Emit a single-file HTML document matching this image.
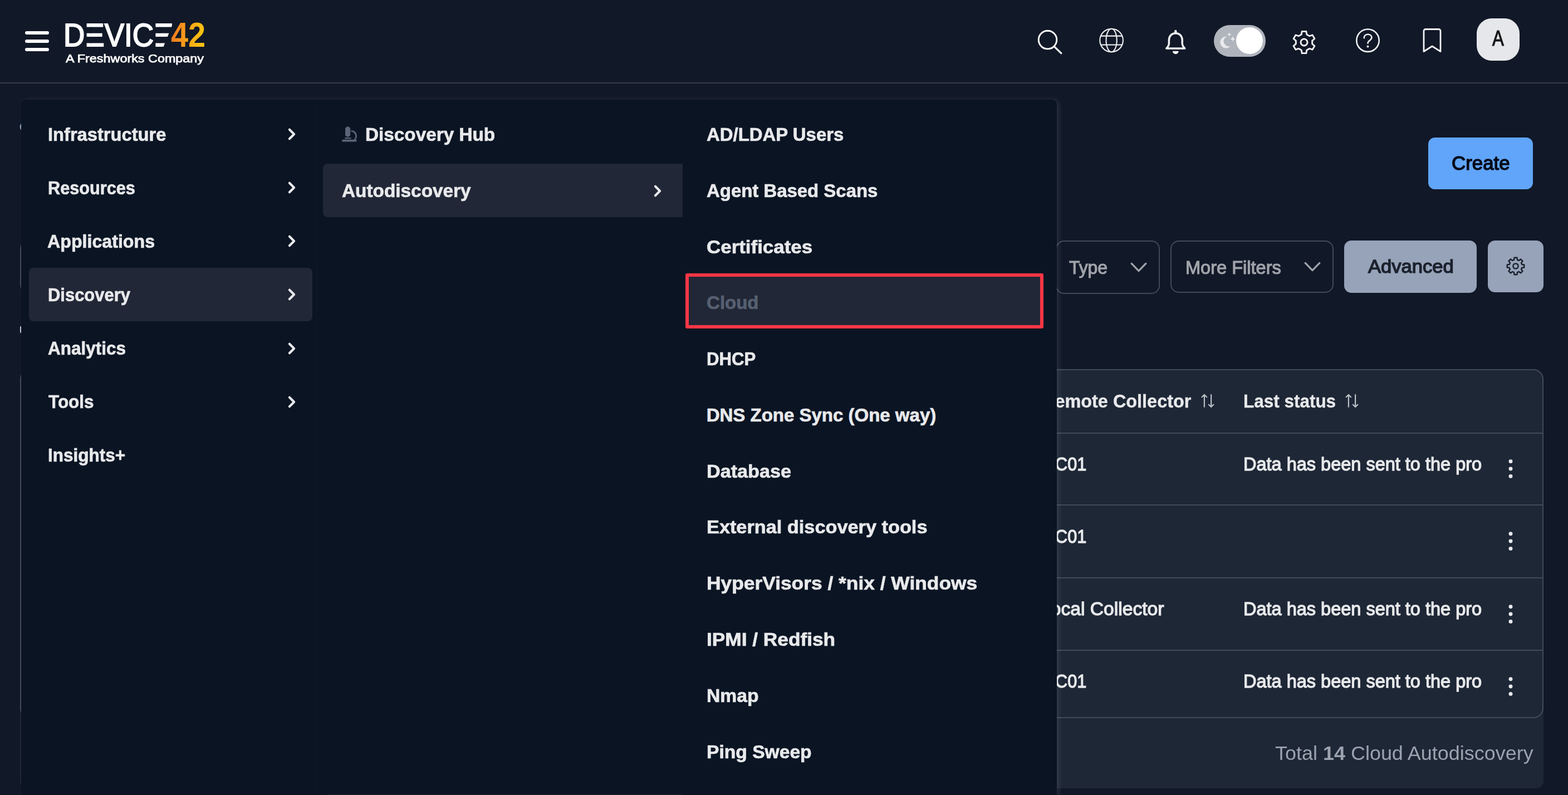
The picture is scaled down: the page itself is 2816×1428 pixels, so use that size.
<!DOCTYPE html>
<html lang="en">
<head>
<meta charset="utf-8">
<title>Device42 - Cloud Autodiscovery</title>
<meta name="viewport" content="width=2816, initial-scale=1">
<style>
html,body{margin:0;padding:0;background:#111827;overflow:hidden;}
html{width:2816px;height:1428px;}
body{width:2816px;height:1428px;overflow:hidden;position:relative;font-family:'Liberation Sans', sans-serif;}
.a{position:absolute;display:block;box-sizing:border-box;}
.t{position:absolute;white-space:nowrap;line-height:1;transform-origin:0 50%;}
.t b{font-weight:700;}
.grad{background:linear-gradient(100deg,#f47c20 10%,#fbb613 70%,#ffcc10 100%);-webkit-background-clip:text;background-clip:text;color:transparent !important;-webkit-text-fill-color:transparent;}
</style>
</head>
<body>
<!-- ===== header ===== -->

<div class="a" style="left:0;top:148px;width:2816px;height:2px;background:#373c49"></div>
<div class="a" style="left:2651.8px;top:32.7px;width:77.2px;height:76.4px;border-radius:27px;background:#e5e7ea"></div>

<div class="t" style="left:114.26px;top:34px;font-size:58.0px;color:#ffffff;transform:scaleX(0.9140);-webkit-text-stroke:2.0px #ffffff;">DEVICE</div>
<svg class="a" style="left:0;top:0" width="400" height="120" viewBox="0 0 400 120" fill="#111827"><rect x="154" y="48.56" width="10" height="11.13"/><rect x="154" y="66.00" width="10" height="11.44"/><rect x="278" y="48.56" width="10" height="11.13"/><rect x="278" y="66.00" width="10" height="11.44"/><path d="M311.8 39.0 L326 39.0 L326 87.0 L292.3 87.0 Z"/></svg>
<div class="t grad" style="left:306.60px;top:31px;font-size:63.0px;font-weight:700;color:#f59e0b;transform:scaleX(0.8863);">42</div>
<div class="t" style="left:118.44px;top:95px;font-size:20.0px;color:#ffffff;transform:scaleX(1.1683);-webkit-text-stroke:0.75px #ffffff;">A Freshworks Company</div>
<div class="a" style="left:45px;top:56px;width:42.5px;height:6.4px;border-radius:4px;background:#fff"></div><div class="a" style="left:45px;top:70.8px;width:42.5px;height:6.4px;border-radius:4px;background:#fff"></div><div class="a" style="left:45px;top:85.8px;width:42.5px;height:6.4px;border-radius:4px;background:#fff"></div>
<svg class="a" style="left:1856px;top:46px" width="60" height="60" viewBox="1856 46 60 60"><circle cx="1881.5" cy="71.6" r="16.3" fill="none" stroke="#fff" stroke-width="2.9"/><path d="M1893.6 83.9 L1905.8 95.6" stroke="#fff" stroke-width="3.2" stroke-linecap="round"/></svg>
<svg class="a" style="left:1966px;top:42px" width="60" height="60" viewBox="1966 42 60 60"><g fill="none" stroke="#f1f2f4" stroke-width="2.05"><circle cx="1996.1" cy="72.5" r="20.8"/><ellipse cx="1996.1" cy="72.5" rx="9.6" ry="20.8"/><path d="M1976.8 64.6 H2015.4 M1976.8 80.5 H2015.4"/></g></svg>
<svg class="a" style="left:2081px;top:44px" width="60" height="64" viewBox="2081 44 60 64"><path d="M2111.3 59.7 c-7.2 0 -11.9 5.4 -11.9 12.2 v6 c0 3.2 -1.7 6 -4.6 9 h33 c-2.9 -3 -4.6 -5.8 -4.6 -9 v-6 c0 -6.8 -4.7 -12.2 -11.9 -12.2 z" fill="none" stroke="#f1f2f4" stroke-width="3.5" stroke-linejoin="round"/><path d="M2111.3 56 v3" stroke="#f1f2f4" stroke-width="4.4" stroke-linecap="round"/><path d="M2105.9 91.8 h10.8 a5.4 5.4 0 0 1 -10.8 0 z" fill="#f1f2f4"/></svg>
<div class="a" style="left:2179.7px;top:44.8px;width:93.5px;height:57.2px;border-radius:29px;background:#b0b4bd"></div><div class="a" style="left:2219.8px;top:48.5px;width:48.4px;height:48.4px;border-radius:50%;background:#fff"></div><svg class="a" style="left:2186px;top:56px" width="36" height="36" viewBox="0 0 36 36"><path d="M17.5 9.5 a10.5 10.5 0 1 0 6.5 17.2 a8.6 8.6 0 0 1 -6.5 -17.2 z" fill="#e9eaed"/><path d="M21.8 2 l1.1 2.7 2.7 1.1 -2.7 1.1 -1.1 2.7 -1.1 -2.7 -2.7 -1.1 2.7 -1.1z M28 9 l1.4 3.4 3.4 1.4 -3.4 1.4 -1.4 3.4 -1.4 -3.4 -3.4 -1.4 3.4 -1.4z" fill="#e9eaed"/></svg>
<svg class="a" style="left:2317.0px;top:50.5px" width="50" height="50" viewBox="2317.0 50.5 50 50"><path d="M2337.15 61.41 L2338.18 55.87 L2345.82 55.87 L2346.85 61.41 L2351.78 64.25 L2357.09 62.38 L2360.91 68.99 L2356.63 72.66 L2356.63 78.34 L2360.91 82.01 L2357.09 88.62 L2351.78 86.75 L2346.85 89.59 L2345.82 95.13 L2338.18 95.13 L2337.15 89.59 L2332.22 86.75 L2326.91 88.62 L2323.09 82.01 L2327.37 78.34 L2327.37 72.66 L2323.09 68.99 L2326.91 62.38 L2332.22 64.25 Z" fill="none" stroke="#f1f2f4" stroke-width="2.9" stroke-linejoin="round"/><circle cx="2342.0" cy="75.5" r="6.0" fill="none" stroke="#f1f2f4" stroke-width="2.9"/></svg>
<svg class="a" style="left:2426px;top:42px" width="60" height="60" viewBox="2426 42 60 60"><circle cx="2456.5" cy="72.7" r="20.2" fill="none" stroke="#f1f2f4" stroke-width="2.6"/><path d="M2449.8 68.2 c0 -4 3 -6.4 6.9 -6.4 c3.9 0 6.7 2.4 6.7 5.7 c0 5 -6.9 5 -6.9 10.3" fill="none" stroke="#f1f2f4" stroke-width="2.6" stroke-linecap="round"/><circle cx="2456.4" cy="83.4" r="2" fill="#f1f2f4"/></svg>
<svg class="a" style="left:2546px;top:42px" width="52" height="62" viewBox="2546 42 52 62"><path d="M2557 55.5 a3 3 0 0 1 3 -3 h24 a3 3 0 0 1 3 3 v37 l-15 -9.5 l-15 9.5 z" fill="none" stroke="#f1f2f4" stroke-width="2.8" stroke-linejoin="round"/></svg>
<!-- ===== page content (partly covered by the mega menu) ===== -->

<div class="a" style="left:2565px;top:247px;width:188px;height:93px;border-radius:12px;background:#60a5fa"></div>
<div class="a" style="left:36px;top:432px;width:1840px;height:94px;border-radius:15px;border:2px solid #424a57"></div>
<div class="a" style="left:1896.4px;top:431.6px;width:186.2px;height:96.2px;border-radius:15px;border:2px solid #424a57"></div>
<div class="a" style="left:2102.4px;top:431.6px;width:292.4px;height:94.4px;border-radius:15px;border:2px solid #424a57"></div>
<div class="a" style="left:2413.6px;top:431.7px;width:238.4px;height:94px;border-radius:13px;background:#96a3b9"></div>
<div class="a" style="left:2671.8px;top:431.7px;width:100.5px;height:93.2px;border-radius:13px;background:#96a3b9"></div>
<div class="a" style="left:36px;top:664px;width:2736px;height:752px;border-radius:18px 18px 13px 13px;background:#1e2736"></div>
<div class="a" style="left:36px;top:663px;width:2736px;height:626.5px;border-radius:18px;border:2px solid #424a57"></div>
<div class="a" style="left:37px;top:777px;width:2734px;height:2px;background:#424a57"></div>
<div class="a" style="left:37px;top:906px;width:2734px;height:2px;background:#424a57"></div>
<div class="a" style="left:37px;top:1037px;width:2734px;height:2px;background:#424a57"></div>
<div class="a" style="left:37px;top:1167px;width:2734px;height:2px;background:#424a57"></div>

<div class="t" style="left:2679.65px;top:50px;font-size:38.5px;color:#141414;transform:scaleX(0.8118);-webkit-text-stroke:1.1px #141414;">A</div>
<div class="t" style="left:2607.05px;top:275px;font-size:35px;color:#060b18;transform:scaleX(0.9953);-webkit-text-stroke:1.5px #060b18;">Create</div>
<div class="t" style="left:1919.66px;top:463px;font-size:34px;color:#a0a3aa;transform:scaleX(0.9351);-webkit-text-stroke:1.2px #a0a3aa;">Type</div>
<div class="t" style="left:2129.06px;top:463px;font-size:34px;color:#a0a3aa;transform:scaleX(0.9569);-webkit-text-stroke:1.2px #a0a3aa;">More Filters</div>
<div class="t" style="left:2457.26px;top:461px;font-size:34px;color:#1c222d;transform:scaleX(1.0171);-webkit-text-stroke:1.5px #1c222d;">Advanced</div>
<div class="t" style="left:1871.34px;top:703px;font-size:34px;font-weight:700;color:#e8e9eb;transform:scaleX(0.9534);-webkit-text-stroke:0.4px #e8e9eb;">Remote Collector</div>
<div class="t" style="left:2232.83px;top:703px;font-size:34px;font-weight:700;color:#e8e9eb;transform:scaleX(0.9255);-webkit-text-stroke:0.4px #e8e9eb;">Last status</div>
<div class="t" style="left:1872.97px;top:816px;font-size:34px;color:#e8e9eb;transform:scaleX(0.9003);-webkit-text-stroke:1.3px #e8e9eb;">RC01</div>
<div class="t" style="left:2233.21px;top:816px;font-size:34px;color:#e8e9eb;transform:scaleX(0.9557);-webkit-text-stroke:1.3px #e8e9eb;">Data has been sent to the pro</div>
<div class="t" style="left:1872.97px;top:946px;font-size:34px;color:#e8e9eb;transform:scaleX(0.9003);-webkit-text-stroke:1.3px #e8e9eb;">RC01</div>
<div class="t" style="left:1868.10px;top:1076px;font-size:34px;color:#e8e9eb;transform:scaleX(0.9893);-webkit-text-stroke:1.3px #e8e9eb;">Local Collector</div>
<div class="t" style="left:2233.21px;top:1076px;font-size:34px;color:#e8e9eb;transform:scaleX(0.9557);-webkit-text-stroke:1.3px #e8e9eb;">Data has been sent to the pro</div>
<div class="t" style="left:1872.97px;top:1206px;font-size:34px;color:#e8e9eb;transform:scaleX(0.9003);-webkit-text-stroke:1.3px #e8e9eb;">RC01</div>
<div class="t" style="left:2233.21px;top:1206px;font-size:34px;color:#e8e9eb;transform:scaleX(0.9557);-webkit-text-stroke:1.3px #e8e9eb;">Data has been sent to the pro</div>
<div class="t" style="left:2290.20px;top:1335px;font-size:35.2px;color:#9ca3af;transform:scaleX(1.0218);">Total <b>14</b> Cloud Autodiscovery</div>
<div class="a" style="left:36.4px;top:585.6px;width:2px;height:12.6px;border-radius:1px;background:#c3c7cd"></div>
<svg class="a" style="left:30px;top:216px" width="12" height="24" viewBox="30 216 12 24"><ellipse cx="39.6" cy="227.8" rx="3.9" ry="6.2" fill="#8ea1b8"/></svg>
<svg class="a" style="left:2024.8px;top:459.9px" width="40" height="40" viewBox="2024.8 459.9 40 40"><path d="M2032.0 473.3 L2044.8 486.5 L2057.6 473.3" fill="none" stroke="#a0a3aa" stroke-width="3.3" stroke-linecap="round" stroke-linejoin="round"/></svg>
<svg class="a" style="left:2336.9px;top:459.2px" width="40" height="40" viewBox="2336.9 459.2 40 40"><path d="M2344.1 472.6 L2356.9 485.8 L2369.7 472.6" fill="none" stroke="#a0a3aa" stroke-width="3.3" stroke-linecap="round" stroke-linejoin="round"/></svg>
<svg class="a" style="left:2701.8px;top:458.2px" width="40" height="40" viewBox="2701.8 458.2 40 40"><path d="M2718.80 467.00 L2719.39 462.99 L2724.21 462.99 L2724.80 467.00 L2727.60 468.15 L2730.85 465.74 L2734.26 469.15 L2731.85 472.40 L2733.00 475.20 L2737.01 475.79 L2737.01 480.61 L2733.00 481.20 L2731.85 484.00 L2734.26 487.25 L2730.85 490.66 L2727.60 488.25 L2724.80 489.40 L2724.21 493.41 L2719.39 493.41 L2718.80 489.40 L2716.00 488.25 L2712.75 490.66 L2709.34 487.25 L2711.75 484.00 L2710.60 481.20 L2706.59 480.61 L2706.59 475.79 L2710.60 475.20 L2711.75 472.40 L2709.34 469.15 L2712.75 465.74 L2716.00 468.15 Z" fill="none" stroke="#1c222d" stroke-width="2.5" stroke-linejoin="round"/><circle cx="2721.8" cy="478.2" r="4.6" fill="none" stroke="#1c222d" stroke-width="2.5"/></svg>
<svg class="a" style="left:2153.4px;top:704.4px" width="32" height="32" viewBox="-16 -16 32 32"><g fill="none" stroke="#bcc0c7" stroke-width="2.2" stroke-linecap="round" stroke-linejoin="round"><path d="M-6.1 10.8 V-10.6 M-10.4 -6.8 L-6.1 -11 L-1.8 -6.8"/><path d="M6.1 -11 V10.6 M1.8 6.8 L6.1 11 L10.4 6.8"/></g></svg>
<svg class="a" style="left:2412px;top:704.4px" width="32" height="32" viewBox="-16 -16 32 32"><g fill="none" stroke="#bcc0c7" stroke-width="2.2" stroke-linecap="round" stroke-linejoin="round"><path d="M-6.1 10.8 V-10.6 M-10.4 -6.8 L-6.1 -11 L-1.8 -6.8"/><path d="M6.1 -11 V10.6 M1.8 6.8 L6.1 11 L10.4 6.8"/></g></svg>
<svg class="a" style="left:2704.6px;top:818.4px" width="16" height="48" viewBox="-8 -24 16 48"><circle cx="0" cy="-13.3" r="3.45" fill="#e8e9eb"/><circle cx="0" cy="0" r="3.45" fill="#e8e9eb"/><circle cx="0" cy="13.4" r="3.45" fill="#e8e9eb"/></svg>
<svg class="a" style="left:2704.6px;top:948.3px" width="16" height="48" viewBox="-8 -24 16 48"><circle cx="0" cy="-13.3" r="3.45" fill="#e8e9eb"/><circle cx="0" cy="0" r="3.45" fill="#e8e9eb"/><circle cx="0" cy="13.4" r="3.45" fill="#e8e9eb"/></svg>
<svg class="a" style="left:2704.6px;top:1078.8px" width="16" height="48" viewBox="-8 -24 16 48"><circle cx="0" cy="-13.3" r="3.45" fill="#e8e9eb"/><circle cx="0" cy="0" r="3.45" fill="#e8e9eb"/><circle cx="0" cy="13.4" r="3.45" fill="#e8e9eb"/></svg>
<svg class="a" style="left:2704.6px;top:1208.9px" width="16" height="48" viewBox="-8 -24 16 48"><circle cx="0" cy="-13.3" r="3.45" fill="#e8e9eb"/><circle cx="0" cy="0" r="3.45" fill="#e8e9eb"/><circle cx="0" cy="13.4" r="3.45" fill="#e8e9eb"/></svg>
<!-- ===== mega menu ===== -->

<div class="a" style="left:38px;top:179px;width:1860px;height:1249px;border-radius:9px 9px 0 0;background:#0a1423;box-shadow:4px 0 8px 0 rgba(200,205,215,0.13)"></div>
<div class="a" style="left:567.5px;top:188px;width:2.5px;height:1240px;background:rgba(255,255,255,0.012)"></div>
<div class="a" style="left:52px;top:481px;width:509px;height:96px;border-radius:8px;background:#212736"></div>
<div class="a" style="left:580px;top:294px;width:646px;height:96px;border-radius:8px 0 0 8px;background:#212736"></div>
<div class="a" style="left:1230.8px;top:490.8px;width:643.4px;height:99.6px;border-radius:3px;border:6.3px solid #fa3645;background:#212736"></div>
<div class="a" style="left:588px;top:1426.6px;width:637px;height:1.4px;background:rgba(255,255,255,0.10)"></div>

<div class="t" style="left:85.97px;top:225px;font-size:33px;font-weight:700;color:#e8e9eb;transform:scaleX(0.9897);-webkit-text-stroke:0.7px #e8e9eb;">Infrastructure</div>
<div class="t" style="left:86.07px;top:321px;font-size:33px;font-weight:700;color:#e8e9eb;transform:scaleX(0.9296);-webkit-text-stroke:0.7px #e8e9eb;">Resources</div>
<div class="t" style="left:85.44px;top:417px;font-size:33px;font-weight:700;color:#e8e9eb;transform:scaleX(0.9749);-webkit-text-stroke:0.7px #e8e9eb;">Applications</div>
<div class="t" style="left:86.35px;top:513px;font-size:33px;font-weight:700;color:#e8e9eb;transform:scaleX(0.9375);-webkit-text-stroke:0.7px #e8e9eb;">Discovery</div>
<div class="t" style="left:85.93px;top:609px;font-size:33px;font-weight:700;color:#e8e9eb;transform:scaleX(0.9543);-webkit-text-stroke:0.7px #e8e9eb;">Analytics</div>
<div class="t" style="left:86.73px;top:705px;font-size:33px;font-weight:700;color:#e8e9eb;transform:scaleX(0.9530);-webkit-text-stroke:0.7px #e8e9eb;">Tools</div>
<div class="t" style="left:86.03px;top:801px;font-size:33px;font-weight:700;color:#e8e9eb;transform:scaleX(0.9539);-webkit-text-stroke:0.7px #e8e9eb;">Insights+</div>
<div class="t" style="left:655.94px;top:225px;font-size:33px;font-weight:700;color:#e8e9eb;transform:scaleX(1.0091);-webkit-text-stroke:0.7px #e8e9eb;">Discovery Hub</div>
<div class="t" style="left:613.95px;top:326px;font-size:33px;font-weight:700;color:#e8e9eb;transform:scaleX(1.0105);-webkit-text-stroke:0.7px #e8e9eb;">Autodiscovery</div>
<div class="t" style="left:1269.05px;top:225px;font-size:33px;font-weight:700;color:#e8e9eb;transform:scaleX(0.9975);-webkit-text-stroke:0.7px #e8e9eb;">AD/LDAP Users</div>
<div class="t" style="left:1269.05px;top:326px;font-size:33px;font-weight:700;color:#e8e9eb;transform:scaleX(0.9976);-webkit-text-stroke:0.7px #e8e9eb;">Agent Based Scans</div>
<div class="t" style="left:1268.71px;top:427px;font-size:33px;font-weight:700;color:#e8e9eb;transform:scaleX(1.0579);-webkit-text-stroke:0.7px #e8e9eb;">Certificates</div>
<div class="t" style="left:1269.05px;top:527px;font-size:33px;font-weight:700;color:#566072;-webkit-text-stroke:0.7px #566072;">Cloud</div>
<div class="t" style="left:1268.74px;top:628px;font-size:33px;font-weight:700;color:#e8e9eb;transform:scaleX(0.9441);-webkit-text-stroke:0.7px #e8e9eb;">DHCP</div>
<div class="t" style="left:1268.65px;top:729px;font-size:33px;font-weight:700;color:#e8e9eb;-webkit-text-stroke:0.7px #e8e9eb;">DNS Zone Sync (One way)</div>
<div class="t" style="left:1268.59px;top:830px;font-size:33px;font-weight:700;color:#e8e9eb;transform:scaleX(1.0359);-webkit-text-stroke:0.7px #e8e9eb;">Database</div>
<div class="t" style="left:1268.59px;top:930px;font-size:33px;font-weight:700;color:#e8e9eb;transform:scaleX(1.0393);-webkit-text-stroke:0.7px #e8e9eb;">External discovery tools</div>
<div class="t" style="left:1268.53px;top:1031px;font-size:33px;font-weight:700;color:#e8e9eb;transform:scaleX(1.0711);-webkit-text-stroke:0.7px #e8e9eb;">HyperVisors / *nix / Windows</div>
<div class="t" style="left:1268.54px;top:1132px;font-size:33px;font-weight:700;color:#e8e9eb;transform:scaleX(1.0683);-webkit-text-stroke:0.7px #e8e9eb;">IPMI / Redfish</div>
<div class="t" style="left:1268.62px;top:1233px;font-size:33px;font-weight:700;color:#e8e9eb;transform:scaleX(1.0199);-webkit-text-stroke:0.7px #e8e9eb;">Nmap</div>
<div class="t" style="left:1268.62px;top:1334px;font-size:33px;font-weight:700;color:#e8e9eb;transform:scaleX(1.0183);-webkit-text-stroke:0.7px #e8e9eb;">Ping Sweep</div>
<svg class="a" style="left:610px;top:222px" width="36" height="36" viewBox="610 222 36 36"><g fill="#5c6577"><path d="M624.6 227.6 L628.5 230 V243.2 L624.6 245.6 L620.7 243.2 V230 Z" stroke="#5c6577" stroke-width="1.2" stroke-linejoin="round"/><rect x="619" y="247.1" width="11.8" height="2.1" rx="1"/><rect x="614" y="250.8" width="26.6" height="3.6" rx="1.7"/></g><path d="M630.6 235.3 A8.9 8.9 0 0 1 636.8 250.6" fill="none" stroke="#5c6577" stroke-width="2.8"/></svg>
<svg class="a" style="left:504.2px;top:221.1px" width="40" height="40" viewBox="504.2 221.1 40 40"><path d="M520.1 232.9 L528.3 241.1 L520.1 249.3" fill="none" stroke="#e8e9eb" stroke-width="4.2" stroke-linecap="round" stroke-linejoin="round"/></svg>
<svg class="a" style="left:504.2px;top:317.2px" width="40" height="40" viewBox="504.2 317.2 40 40"><path d="M520.1 329.0 L528.3 337.2 L520.1 345.4" fill="none" stroke="#e8e9eb" stroke-width="4.2" stroke-linecap="round" stroke-linejoin="round"/></svg>
<svg class="a" style="left:504.2px;top:413.3px" width="40" height="40" viewBox="504.2 413.3 40 40"><path d="M520.1 425.1 L528.3 433.3 L520.1 441.5" fill="none" stroke="#e8e9eb" stroke-width="4.2" stroke-linecap="round" stroke-linejoin="round"/></svg>
<svg class="a" style="left:504.2px;top:509.4px" width="40" height="40" viewBox="504.2 509.4 40 40"><path d="M520.1 521.2 L528.3 529.4 L520.1 537.6" fill="none" stroke="#e8e9eb" stroke-width="4.2" stroke-linecap="round" stroke-linejoin="round"/></svg>
<svg class="a" style="left:504.2px;top:605.5px" width="40" height="40" viewBox="504.2 605.5 40 40"><path d="M520.1 617.3 L528.3 625.5 L520.1 633.7" fill="none" stroke="#e8e9eb" stroke-width="4.2" stroke-linecap="round" stroke-linejoin="round"/></svg>
<svg class="a" style="left:504.2px;top:701.6px" width="40" height="40" viewBox="504.2 701.6 40 40"><path d="M520.1 713.4 L528.3 721.6 L520.1 729.8" fill="none" stroke="#e8e9eb" stroke-width="4.2" stroke-linecap="round" stroke-linejoin="round"/></svg>
<svg class="a" style="left:1160.5px;top:322.7px" width="40" height="40" viewBox="1160.5 322.7 40 40"><path d="M1176.4 334.5 L1184.6 342.7 L1176.4 350.9" fill="none" stroke="#e8e9eb" stroke-width="4.2" stroke-linecap="round" stroke-linejoin="round"/></svg>
</body>
</html>
